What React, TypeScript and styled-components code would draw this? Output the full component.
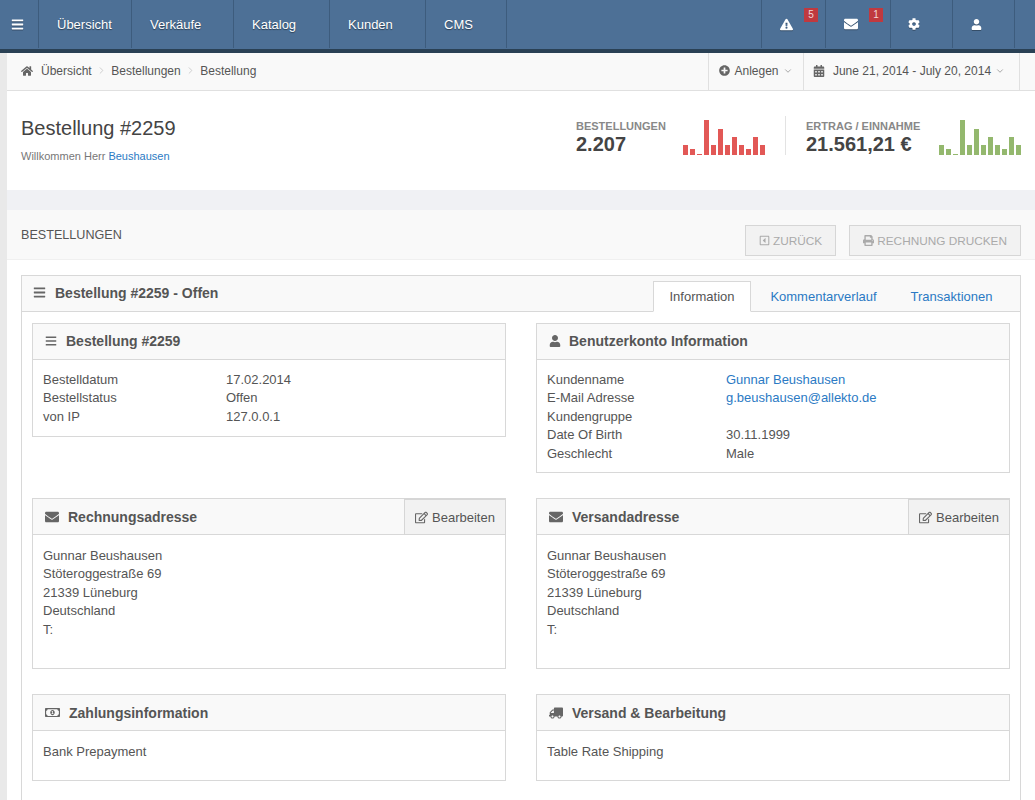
import React from "react";
import styled, { createGlobalStyle } from "styled-components";
import { ChevronDown, ChevronRight } from "lucide-react";
import {
  FaBars,
  FaCalendarAlt,
  FaCog,
  FaEnvelope,
  FaExclamationTriangle,
  FaHome,
  FaPlusCircle,
  FaPrint,
  FaRegCaretSquareLeft,
  FaRegEdit,
  FaRegMoneyBillAlt,
  FaTruck,
  FaUser,
} from "react-icons/fa";

const GlobalStyle = createGlobalStyle`
  * { box-sizing: border-box; }
  html, body { margin: 0; padding: 0; }
  body {
    background: #e9e9e9;
    color: #555;
    font-family: "Liberation Sans", Arial, sans-serif;
    font-size: 13px;
    overflow: hidden;
  }
`;

const Page = styled.div`
  height: 800px;
  overflow: hidden;
`;

const TopBar = styled.nav`
  height: 53px;
  display: flex;
  background: #4d7096;
  border-bottom: 4px solid #2a4155;
`;

const NavCell = styled.div<{ $w: number }>`
  width: ${(p) => p.$w}px;
  height: 48px;
  display: flex;
  align-items: center;
  position: relative;
  padding-left: 18px;
  border-right: 1px solid #3d5c7d;
  color: #fff;
  font-size: 13px;
  -webkit-font-smoothing: antialiased;
  text-shadow: 0 1px 1px rgba(0, 0, 0, 0.45);
`;

const NavIconCell = styled.div<{ $w: number; $pr: number }>`
  width: ${(p) => p.$w}px;
  height: 48px;
  display: flex;
  align-items: center;
  justify-content: center;
  position: relative;
  padding-right: ${(p) => p.$pr}px;
  border-right: 1px solid #3d5c7d;
  color: #fff;
  svg { filter: drop-shadow(0 1px 0 rgba(0, 0, 0, 0.3)); }
`;

const NavSpacer = styled.div`
  flex: 0 0 255px;
  border-right: 1px solid #3d5c7d;
  height: 48px;
`;

const Badge = styled.span`
  position: absolute;
  top: 8px;
  right: 7px;
  width: 14px;
  height: 14px;
  background: #c0393f;
  color: #f3d7d8;
  font-size: 10px;
  line-height: 14px;
  text-align: center;
`;

const Main = styled.main`
  margin-left: 7px;
  background: #fff;
`;

const Breadcrumbs = styled.div`
  height: 38px;
  display: flex;
  justify-content: space-between;
  background: #f9f9f9;
  border-bottom: 1px solid #e0e0e0;
`;

const Trail = styled.div`
  display: flex;
  align-items: center;
  padding: 0 0 2px 14px;
  font-size: 12px;
  color: #555;
`;

const TrailSep = styled.span`
  display: inline-flex;
  margin: 0 4.3px;
  color: #bbb;
`;

const HomeIcon = styled.span`
  display: inline-flex;
  margin-right: 8px;
  color: #666;
`;

const CrumbActions = styled.div`
  display: flex;
  margin-right: 15px;
`;

const CrumbAction = styled.div<{ $w: number; $pr?: number }>`
  width: ${(p) => p.$w}px;
  display: flex;
  align-items: center;
  justify-content: center;
  gap: 4px;
  padding: 0 ${(p) => p.$pr ?? 0}px 2px 0;
  border-left: 1px solid #e0e0e0;
  font-size: 12px;
  color: #555;
  &:last-child { border-right: 1px solid #e0e0e0; }
`;

const CrumbIcon = styled.span<{ $mr: number }>`
  display: inline-flex;
  margin-right: ${(p) => p.$mr}px;
  color: #666;
`;

const Caret = styled(ChevronDown)`
  color: #777;
  margin-top: 1px;
`;

const PageHead = styled.header`
  height: 99px;
  display: flex;
  justify-content: space-between;
  padding: 24px 14px 0;
`;

const PageTitle = styled.h1`
  margin: 0;
  font-size: 20px;
  font-weight: 400;
  line-height: 26px;
  color: #444;
`;

const Welcome = styled.p`
  margin: 8px 0 0;
  font-size: 11px;
  line-height: 14px;
  color: #777;
`;

const Link = styled.a`
  color: #2b7ac4;
`;

const Stats = styled.div`
  display: flex;
  align-items: flex-start;
  margin-top: 1px;
`;

const Stat = styled.div`
  display: flex;
  align-items: flex-end;
  height: 39px;
`;

const StatText = styled.div<{ $w: number }>`
  width: ${(p) => p.$w}px;
`;

const StatLabel = styled.div`
  font-size: 11px;
  font-weight: 700;
  line-height: 14px;
  color: #888;
  white-space: nowrap;
`;

const StatValue = styled.div`
  font-size: 20px;
  font-weight: 700;
  line-height: 22px;
  color: #444;
  white-space: nowrap;
`;

const StatDivider = styled.div`
  width: 1px;
  height: 39px;
  margin: 0 20px;
  background: #e3e3e3;
`;

const Bars = styled.div`
  display: flex;
  align-items: flex-end;
  gap: 2px;
  height: 35px;
`;

const Bar = styled.div<{ $color: string }>`
  width: 5px;
  background: ${(p) => p.$color};
`;

const Band = styled.div`
  height: 20px;
  background: #f0f1f4;
`;

const SectionHead = styled.div`
  height: 50px;
  display: flex;
  justify-content: space-between;
  background: #f9f9f9;
  border-bottom: 1px solid #f0f0f0;
  padding: 14px 14px 0;
`;

const SectionTitle = styled.div`
  font-size: 12.6px;
  line-height: 21px;
  color: #555;
  padding-top: 1px;
`;

const SectionActions = styled.div`
  display: flex;
  gap: 13px;
  margin-top: 1px;
`;

const GhostButton = styled.div`
  height: 31px;
  padding: 0 13px;
  display: flex;
  align-items: center;
  gap: 3px;
  background: #f2f2f2;
  border: 1px solid #d6d6d6;
  color: #aaa;
  font-size: 11.8px;
`;

const Content = styled.div`
  padding: 15px 14px 0;
`;

const Panel = styled.section`
  border: 1px solid #d8d8d8;
  border-bottom: 0;
`;

const PanelHead = styled.div`
  height: 36px;
  display: flex;
  justify-content: space-between;
  align-items: flex-end;
  background: #f9f9f9;
  border-bottom: 1px solid #d8d8d8;
  padding-left: 11px;
`;

const PanelTitle = styled.div`
  display: flex;
  align-items: center;
  gap: 9px;
  align-self: center;
  padding-bottom: 2px;
  font-size: 14px;
  font-weight: 700;
  color: #555;
  svg { color: #666; }
`;

const Tabs = styled.div`
  display: flex;
  margin-right: 13px;
`;

const Tab = styled.div<{ $active?: boolean; $w: number }>`
  width: ${(p) => p.$w}px;
  height: 31px;
  display: flex;
  align-items: center;
  justify-content: center;
  margin-bottom: -1px;
  font-size: 13px;
  color: ${(p) => (p.$active ? "#555" : "#2b7ac4")};
  background: ${(p) => (p.$active ? "#fff" : "transparent")};
  border: 1px solid ${(p) => (p.$active ? "#d8d8d8" : "transparent")};
  border-bottom: 1px solid ${(p) => (p.$active ? "#fff" : "transparent")};
`;

const PanelBody = styled.div`
  display: grid;
  grid-template-columns: 474px 474px;
  column-gap: 30px;
  padding: 11px 10px 0;
  align-items: start;
`;

const Card = styled.section<{ $h: number; $mb: number }>`
  height: ${(p) => p.$h}px;
  margin-bottom: ${(p) => p.$mb}px;
  border: 1px solid #d8d8d8;
  background: #fff;
`;

const CardHead = styled.div`
  height: 36px;
  display: flex;
  justify-content: space-between;
  background: #f9f9f9;
  border-bottom: 1px solid #d8d8d8;
  padding-left: 12px;
`;

const CardTitle = styled.div<{ $gap?: number; $pb?: number }>`
  display: flex;
  align-items: center;
  gap: ${(p) => p.$gap ?? 9}px;
  padding-bottom: ${(p) => p.$pb ?? 0}px;
  font-size: 14px;
  font-weight: 700;
  color: #555;
  svg { color: #666; }
`;

const TruckIcon = styled(FaTruck)`
  transform: scaleX(-1);
`;

const EditButton = styled.div`
  width: 102px;
  height: 37px;
  margin: -1px -1px 0 0;
  display: flex;
  align-items: center;
  justify-content: center;
  gap: 4px;
  background: #f2f2f2;
  border: 1px solid #d6d6d6;
  border-top-width: 2px;
  font-size: 13px;
  color: #555;
  svg { color: #666; }
`;

const CardBody = styled.div`
  padding: 10.7px 10px 0;
  font-size: 13px;
  line-height: 18.57px;
  color: #555;
`;

const Row = styled.div<{ $col: number }>`
  display: grid;
  grid-template-columns: ${(p) => p.$col}px 1fr;
  min-height: 18.57px;
`;

const AddressBody = styled(CardBody)`
  padding-top: 11.5px;
`;

const barValues = [10, 6, 1, 35, 10, 26, 10, 18, 10, 6, 18, 10];

function Chart({ color }: { color: string }) {
  return (
    <Bars>
      {barValues.map((v, i) => (
        <Bar key={i} $color={color} style={{ height: v }} />
      ))}
    </Bars>
  );
}

function Address() {
  return (
    <AddressBody>
      Gunnar Beushausen
      <br />
      Stöteroggestraße 69
      <br />
      21339 Lüneburg
      <br />
      Deutschland
      <br />
      T:
    </AddressBody>
  );
}

export default function App() {
  return (
    <Page>
      <GlobalStyle />
      <TopBar>
        <NavIconCell $w={39} $pr={4}>
          <FaBars size={13} />
        </NavIconCell>
        <NavCell $w={93}>Übersicht</NavCell>
        <NavCell $w={102}>Verkäufe</NavCell>
        <NavCell $w={96}>Katalog</NavCell>
        <NavCell $w={96}>Kunden</NavCell>
        <NavCell $w={81}>CMS</NavCell>
        <NavSpacer />
        <NavIconCell $w={64} $pr={14}>
          <FaExclamationTriangle size={13} />
          <Badge>5</Badge>
        </NavIconCell>
        <NavIconCell $w={65} $pr={14}>
          <FaEnvelope size={14} />
          <Badge>1</Badge>
        </NavIconCell>
        <NavIconCell $w={62} $pr={15}>
          <FaCog size={12} />
        </NavIconCell>
        <NavIconCell $w={62} $pr={14}>
          <FaUser size={11} />
        </NavIconCell>
      </TopBar>
      <Main>
        <Breadcrumbs>
          <Trail>
            <HomeIcon>
              <FaHome size={12} />
            </HomeIcon>
            Übersicht
            <TrailSep>
              <ChevronRight size={11} strokeWidth={1.5} />
            </TrailSep>
            Bestellungen
            <TrailSep>
              <ChevronRight size={11} strokeWidth={1.5} />
            </TrailSep>
            Bestellung
          </Trail>
          <CrumbActions>
            <CrumbAction $w={95}>
              <CrumbIcon $mr={0}>
                <FaPlusCircle size={11} />
              </CrumbIcon>
              Anlegen
              <Caret size={10} strokeWidth={1.5} />
            </CrumbAction>
            <CrumbAction $w={217} $pr={5}>
              <CrumbIcon $mr={4}>
                <FaCalendarAlt size={12} />
              </CrumbIcon>
              June 21, 2014 - July 20, 2014
              <Caret size={10} strokeWidth={1.5} />
            </CrumbAction>
          </CrumbActions>
        </Breadcrumbs>
        <PageHead>
          <div>
            <PageTitle>Bestellung #2259</PageTitle>
            <Welcome>
              Willkommen Herr <Link>Beushausen</Link>
            </Welcome>
          </div>
          <Stats>
            <Stat>
              <StatText $w={107}>
                <StatLabel>BESTELLUNGEN</StatLabel>
                <StatValue>2.207</StatValue>
              </StatText>
              <Chart color="#e25856" />
            </Stat>
            <StatDivider />
            <Stat>
              <StatText $w={133}>
                <StatLabel>ERTRAG / EINNAHME</StatLabel>
                <StatValue>21.561,21 €</StatValue>
              </StatText>
              <Chart color="#94b86e" />
            </Stat>
          </Stats>
        </PageHead>
        <Band />
        <SectionHead>
          <SectionTitle>BESTELLUNGEN</SectionTitle>
          <SectionActions>
            <GhostButton>
              <FaRegCaretSquareLeft size={11} />
              ZURÜCK
            </GhostButton>
            <GhostButton>
              <FaPrint size={11} />
              RECHNUNG DRUCKEN
            </GhostButton>
          </SectionActions>
        </SectionHead>
        <Content>
          <Panel>
            <PanelHead>
              <PanelTitle>
                <FaBars size={13} />
                Bestellung #2259 - Offen
              </PanelTitle>
              <Tabs>
                <Tab $active $w={98}>
                  Information
                </Tab>
                <Tab $w={145}>Kommentarverlauf</Tab>
                <Tab $w={111}>Transaktionen</Tab>
              </Tabs>
            </PanelHead>
            <PanelBody>
              <Card $h={114} $mb={61}>
                <CardHead>
                  <CardTitle $pb={2}>
                    <FaBars size={12} />
                    Bestellung #2259
                  </CardTitle>
                </CardHead>
                <CardBody>
                  <Row $col={183}>
                    <span>Bestelldatum</span>
                    <span>17.02.2014</span>
                  </Row>
                  <Row $col={183}>
                    <span>Bestellstatus</span>
                    <span>Offen</span>
                  </Row>
                  <Row $col={183}>
                    <span>von IP</span>
                    <span>127.0.0.1</span>
                  </Row>
                </CardBody>
              </Card>
              <Card $h={150} $mb={25}>
                <CardHead>
                  <CardTitle $gap={8} $pb={2}>
                    <FaUser size={12} />
                    Benutzerkonto Information
                  </CardTitle>
                </CardHead>
                <CardBody>
                  <Row $col={179}>
                    <span>Kundenname</span>
                    <Link>Gunnar Beushausen</Link>
                  </Row>
                  <Row $col={179}>
                    <span>E-Mail Adresse</span>
                    <Link>g.beushausen@allekto.de</Link>
                  </Row>
                  <Row $col={179}>
                    <span>Kundengruppe</span>
                    <span />
                  </Row>
                  <Row $col={179}>
                    <span>Date Of Birth</span>
                    <span>30.11.1999</span>
                  </Row>
                  <Row $col={179}>
                    <span>Geschlecht</span>
                    <span>Male</span>
                  </Row>
                </CardBody>
              </Card>
              <Card $h={171} $mb={25}>
                <CardHead>
                  <CardTitle>
                    <FaEnvelope size={14} />
                    Rechnungsadresse
                  </CardTitle>
                  <EditButton>
                    <FaRegEdit size={13} />
                    Bearbeiten
                  </EditButton>
                </CardHead>
                <Address />
              </Card>
              <Card $h={171} $mb={25}>
                <CardHead>
                  <CardTitle>
                    <FaEnvelope size={14} />
                    Versandadresse
                  </CardTitle>
                  <EditButton>
                    <FaRegEdit size={13} />
                    Bearbeiten
                  </EditButton>
                </CardHead>
                <Address />
              </Card>
              <Card $h={87} $mb={20}>
                <CardHead>
                  <CardTitle>
                    <FaRegMoneyBillAlt size={15} />
                    Zahlungsinformation
                  </CardTitle>
                </CardHead>
                <AddressBody>Bank Prepayment</AddressBody>
              </Card>
              <Card $h={87} $mb={20}>
                <CardHead>
                  <CardTitle>
                    <TruckIcon size={14} />
                    Versand &amp; Bearbeitung
                  </CardTitle>
                </CardHead>
                <AddressBody>Table Rate Shipping</AddressBody>
              </Card>
            </PanelBody>
          </Panel>
        </Content>
      </Main>
    </Page>
  );
}
